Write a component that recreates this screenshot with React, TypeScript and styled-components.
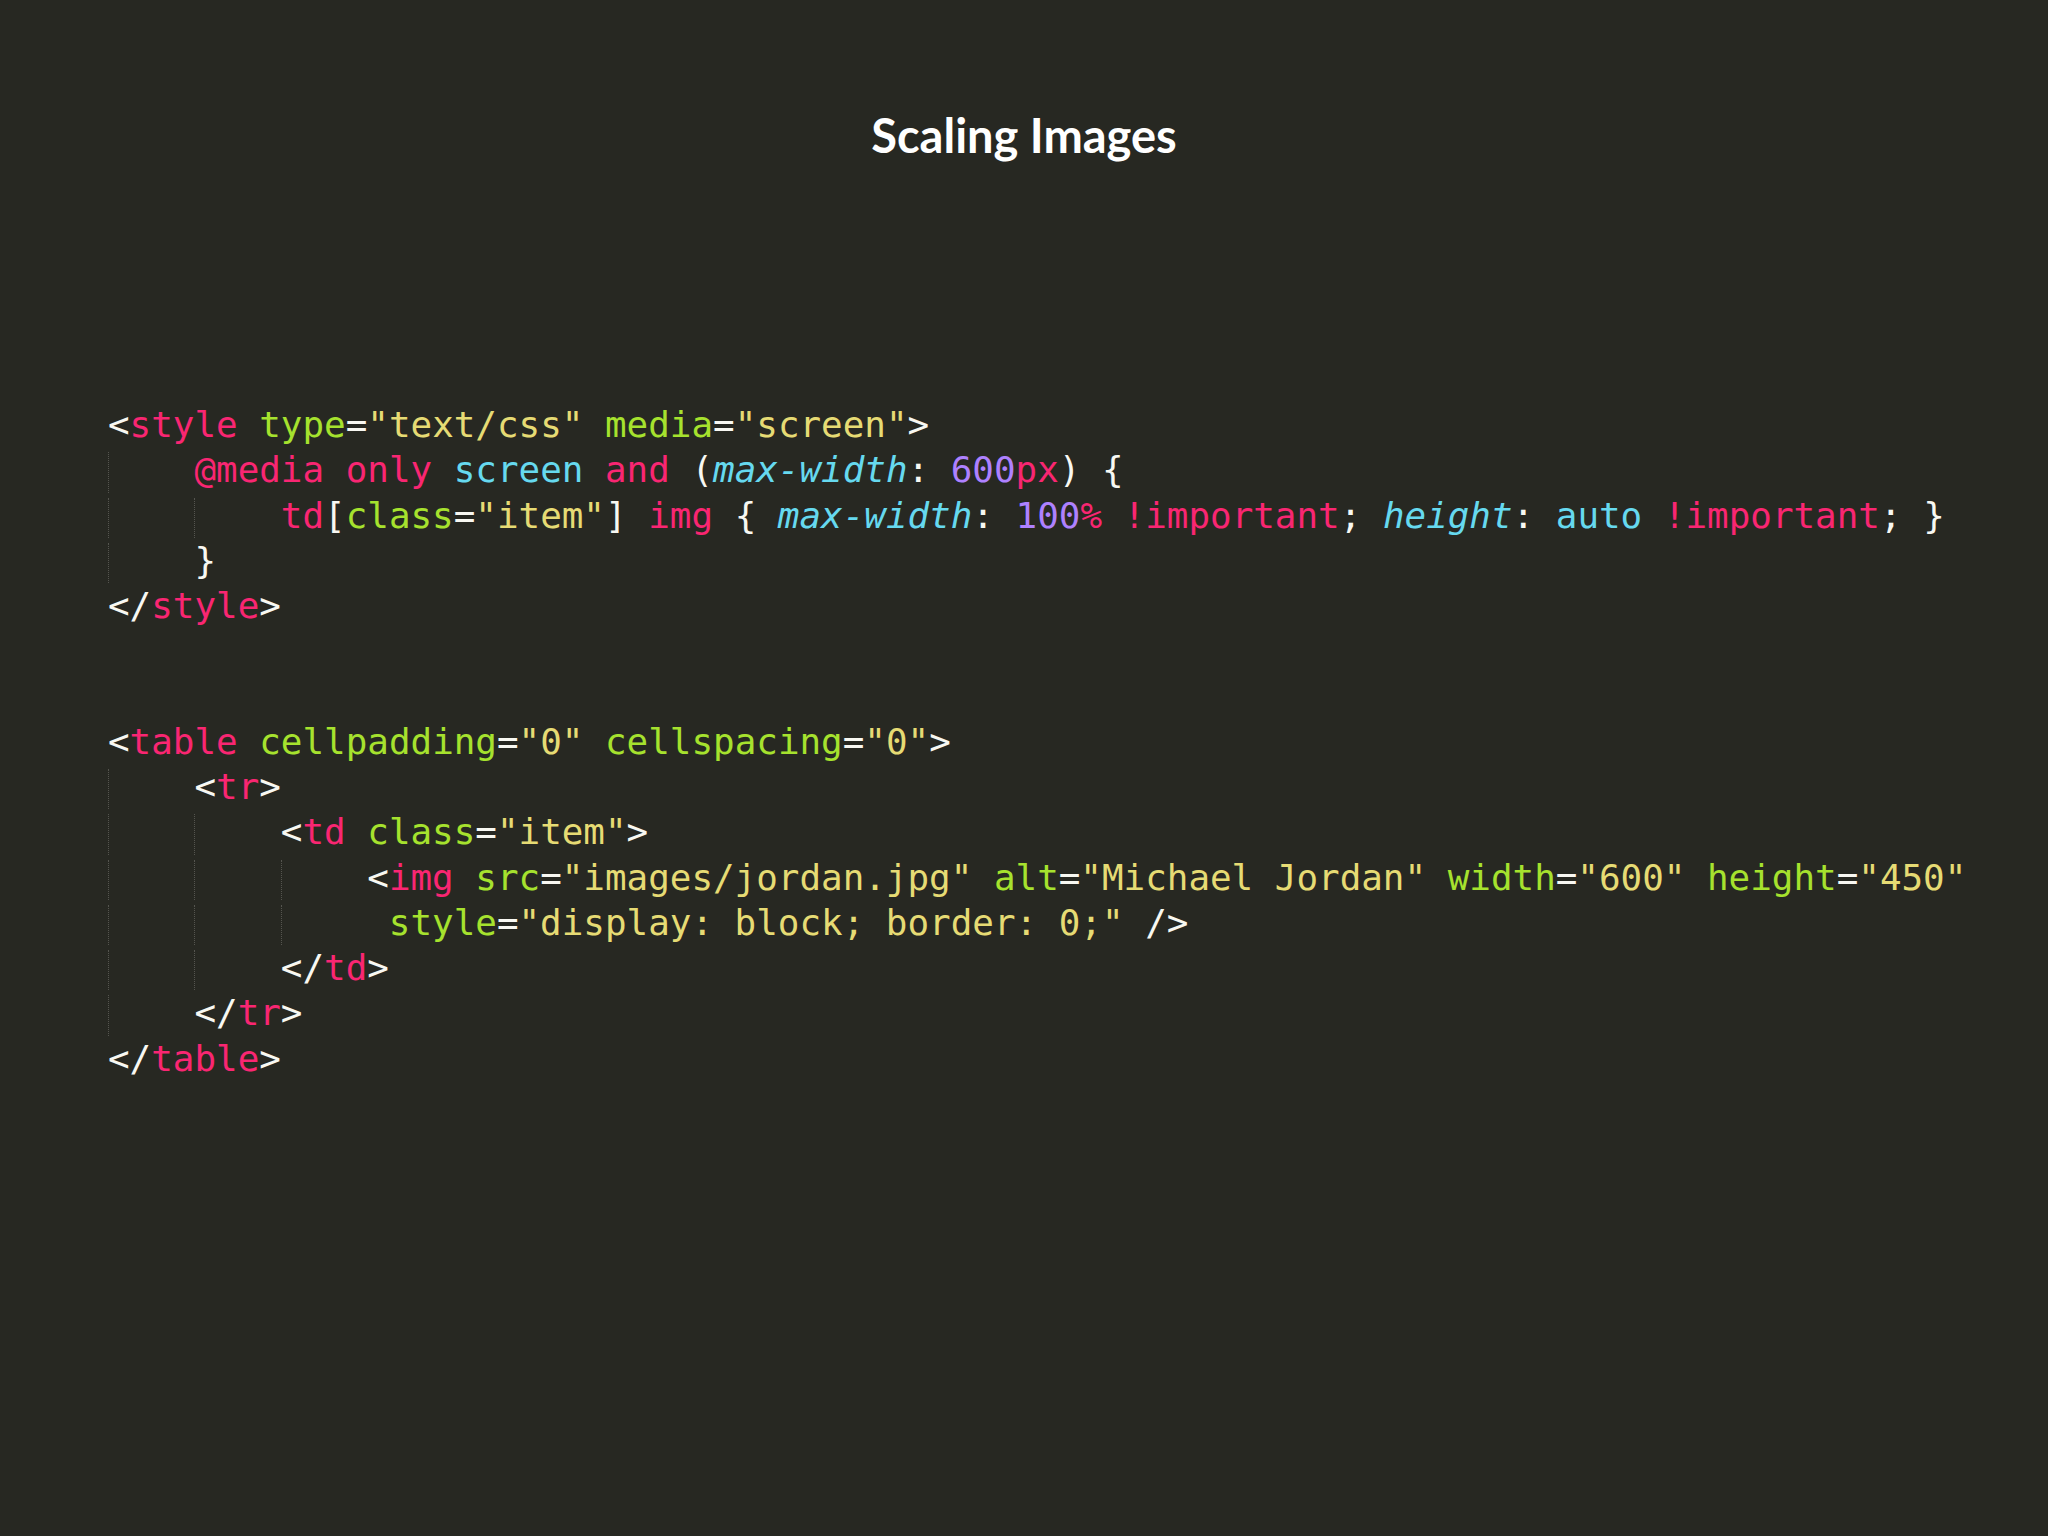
import React from "react";
import styled, { createGlobalStyle } from "styled-components";

type Kind = "punct" | "tag" | "attr" | "str" | "type" | "num" | "prop";
type Tok = [Kind, string];
type CodeLine = { indent: number; extra?: number; toks: Tok[] };

const palette: Record<Kind, string> = {
    punct: "#f8f8f2",
    tag: "#f92672",
    attr: "#a6e22e",
    str: "#e6db74",
    type: "#66d9ef",
    num: "#ae81ff",
    prop: "#66d9ef",
};

const lines: CodeLine[] = [
    {
        indent: 0,
        toks: [
            ["punct", "<"], ["tag", "style"], ["punct", " "], ["attr", "type"], ["punct", "="],
            ["str", '"text/css"'], ["punct", " "], ["attr", "media"], ["punct", "="],
            ["str", '"screen"'], ["punct", ">"],
        ],
    },
    {
        indent: 1,
        toks: [
            ["tag", "@media only"], ["punct", " "], ["type", "screen"], ["punct", " "],
            ["tag", "and"], ["punct", " ("], ["prop", "max-width"], ["punct", ": "],
            ["num", "600"], ["tag", "px"], ["punct", ") {"],
        ],
    },
    {
        indent: 2,
        toks: [
            ["tag", "td"], ["punct", "["], ["attr", "class"], ["punct", "="], ["str", '"item"'],
            ["punct", "] "], ["tag", "img"], ["punct", " { "], ["prop", "max-width"],
            ["punct", ": "], ["num", "100"], ["tag", "%"], ["punct", " "], ["tag", "!important"],
            ["punct", "; "], ["prop", "height"], ["punct", ": "], ["type", "auto"],
            ["punct", " "], ["tag", "!important"], ["punct", "; }"],
        ],
    },
    { indent: 1, toks: [["punct", "}"]] },
    { indent: 0, toks: [["punct", "</"], ["tag", "style"], ["punct", ">"]] },
    { indent: 0, toks: [] },
    { indent: 0, toks: [] },
    {
        indent: 0,
        toks: [
            ["punct", "<"], ["tag", "table"], ["punct", " "], ["attr", "cellpadding"],
            ["punct", "="], ["str", '"0"'], ["punct", " "], ["attr", "cellspacing"],
            ["punct", "="], ["str", '"0"'], ["punct", ">"],
        ],
    },
    { indent: 1, toks: [["punct", "<"], ["tag", "tr"], ["punct", ">"]] },
    {
        indent: 2,
        toks: [
            ["punct", "<"], ["tag", "td"], ["punct", " "], ["attr", "class"], ["punct", "="],
            ["str", '"item"'], ["punct", ">"],
        ],
    },
    {
        indent: 3,
        toks: [
            ["punct", "<"], ["tag", "img"], ["punct", " "], ["attr", "src"], ["punct", "="],
            ["str", '"images/jordan.jpg"'], ["punct", " "], ["attr", "alt"], ["punct", "="],
            ["str", '"Michael Jordan"'], ["punct", " "], ["attr", "width"], ["punct", "="],
            ["str", '"600"'], ["punct", " "], ["attr", "height"], ["punct", "="],
            ["str", '"450"'],
        ],
    },
    {
        indent: 3,
        extra: 1,
        toks: [
            ["attr", "style"], ["punct", "="], ["str", '"display: block; border: 0;"'],
            ["punct", " />"],
        ],
    },
    { indent: 2, toks: [["punct", "</"], ["tag", "td"], ["punct", ">"]] },
    { indent: 1, toks: [["punct", "</"], ["tag", "tr"], ["punct", ">"]] },
    { indent: 0, toks: [["punct", "</"], ["tag", "table"], ["punct", ">"]] },
];

const App = () => {
    return (
        <>
            <GlobalStyle />
            <Slide>
                <Title>Scaling Images</Title>
                <Code>
                    {lines.map((line, i) => (
                        <Row key={i}>
                            {Array.from({ length: line.indent }).map((_, k) => (
                                <Guide key={k} />
                            ))}
                            {line.extra ? <Pad $n={line.extra} /> : null}
                            {line.toks.map(([kind, text], j) => (
                                <Token key={j} $kind={kind}>
                                    {text}
                                </Token>
                            ))}
                        </Row>
                    ))}
                </Code>
            </Slide>
        </>
    );
};

export default App;

const GlobalStyle = createGlobalStyle`
    html, body {
        margin: 0;
        padding: 0;
        background: #272822;
    }
`;

const Slide = styled.div`
    width: 2048px;
    height: 1536px;
    background: #272822;
    display: flex;
    flex-direction: column;
    overflow: hidden;
`;

const Title = styled.h1`
    margin: 0;
    padding-top: 108px;
    height: 54px;
    line-height: 54px;
    text-align: center;
    font-family: Lato, "Open Sans", sans-serif;
    font-weight: 700;
    font-size: 47px;
    color: #ffffff;
`;

const Code = styled.div`
    display: flex;
    flex-direction: column;
    margin-top: 240px;
    padding-left: 108px;
    font-family: "DejaVu Sans Mono", "Liberation Mono", monospace;
    font-size: 35.9px;
    white-space: pre;
`;

const Row = styled.div`
    display: flex;
    align-items: stretch;
    height: 45.25px;
    line-height: 45.25px;
`;

/* one indent level, 4 chars wide, with the dotted guide on its left */
const Guide = styled.span`
    width: 4ch;
    flex: none;
    box-sizing: border-box;
    border-left: 1px dotted #55554f;
    margin-top: 5px;
`;

const Pad = styled.span<{ $n: number }>`
    width: ${(p) => p.$n}ch;
    flex: none;
`;

const Token = styled.span<{ $kind: Kind }>`
    color: ${(p) => palette[p.$kind]};
    font-style: ${(p) => (p.$kind === "prop" ? "italic" : "normal")};
`;
